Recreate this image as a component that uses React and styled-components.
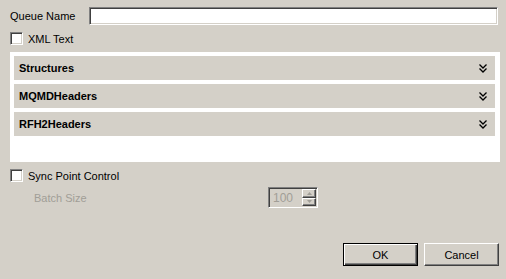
import React from 'react'
import styled, { createGlobalStyle } from 'styled-components'

const Global = createGlobalStyle`
  html, body {
    margin: 0;
    padding: 0;
    background: #d4d0c8;
    font-family: "Liberation Sans", Arial, sans-serif;
    font-size: 11px;
    color: #000;
  }
`

const Dialog = styled.div`
  width: 506px;
  height: 279px;
  box-sizing: border-box;
  padding: 7px 6px 0 10px;
  display: flex;
  flex-direction: column;
`

const Row = styled.div`
  display: flex;
  align-items: center;
  height: ${p => p.h || 13}px;
  margin-top: ${p => p.mt || 0}px;
  padding-left: ${p => p.indent || 0}px;
`

const Label = styled.span`
  width: ${p => p.w ? p.w + 'px' : 'auto'};
  flex-shrink: 0;
  color: ${p => p.disabled ? '#a19e97' : '#000'};
`

const TextInput = styled.div`
  flex: 1;
  height: 18px;
  margin-right: 2px;
  box-sizing: border-box;
  background: #fff;
  border: 1px solid;
  border-color: #808080 #fff #fff #808080;
  box-shadow: inset 1px 1px 0 #404040, inset -1px -1px 0 #d4d0c8;
`

const Check = styled.span`
  width: 13px;
  height: 13px;
  box-sizing: border-box;
  background: #fff;
  border: 1px solid;
  border-color: #808080 #fff #fff #808080;
  box-shadow: inset 1px 1px 0 #404040, inset -1px -1px 0 #d4d0c8;
  margin-right: 5px;
  flex-shrink: 0;
`

const Panel = styled.div`
  margin-top: 7px;
  height: 110px;
  box-sizing: border-box;
  background: #fff;
  padding: 4px 5px 0 4px;
  display: flex;
  flex-direction: column;
  gap: 4px;
`

const Section = styled.div`
  height: 24px;
  background: #d4d0c8;
  display: flex;
  align-items: center;
  justify-content: space-between;
  padding: 0 8px 0 5px;
  font-weight: bold;
`

const Spinner = styled.div`
  width: 50px;
  height: 21px;
  box-sizing: border-box;
  border: 1px solid;
  border-color: #808080 #fff #fff #808080;
  box-shadow: inset 1px 1px 0 #404040;
  display: flex;
  align-items: center;
  padding: 1px 1px 1px 4px;
  color: #a19e97;
  font-size: 12px;
`

const SpinValue = styled.span`
  flex: 1;
`

const SpinButtons = styled.div`
  display: flex;
  flex-direction: column;
  height: 100%;
  width: 14px;
`

const SpinButton = styled.div`
  flex: 1;
  box-sizing: border-box;
  border: 1px solid;
  border-color: #fff #404040 #404040 #fff;
  box-shadow: inset -1px -1px 0 #808080;
  display: flex;
  align-items: center;
  justify-content: center;
`

const Buttons = styled.div`
  display: flex;
  justify-content: flex-end;
  gap: 6px;
  margin-top: 35px;
  padding-right: 1px;
`

const Button = styled.button`
  width: ${p => p.w}px;
  height: 23px;
  box-sizing: border-box;
  font-family: inherit;
  font-size: 11px;
  background: #d4d0c8;
  padding: 0;
  color: #000;
  border: 1px solid;
  border-color: ${p => p.primary ? '#000' : '#fff #404040 #404040 #fff'};
  box-shadow: ${p => p.primary
    ? 'inset 1px 1px 0 #fff, inset -1px -1px 0 #404040, inset -2px -2px 0 #808080'
    : 'inset -1px -1px 0 #808080'};
`

const Chevrons = () => (
  <svg width="8" height="9" viewBox="0 0 8 9">
    <path d="M0.5 0.5 L4 4 L7.5 0.5 M0.5 4.5 L4 8 L7.5 4.5" fill="none" stroke="#000" strokeWidth="1.3" />
  </svg>
)

const Arrow = ({ up }) => (
  <svg width="5" height="3" viewBox="0 0 5 3">
    <path d={up ? 'M0 3 L2.5 0 L5 3 Z' : 'M0 0 L2.5 3 L5 0 Z'} fill="#a19e97" />
  </svg>
)

const sections = ['Structures', 'MQMDHeaders', 'RFH2Headers']

export default function App() {
  return (
    <Dialog>
      <Global />
      <Row h={18}>
        <Label w={79}>Queue Name</Label>
        <TextInput />
      </Row>
      <Row mt={7}>
        <Check />
        <Label>XML Text</Label>
      </Row>
      <Panel>
        {sections.map(s => (
          <Section key={s}>
            {s}
            <Chevrons />
          </Section>
        ))}
      </Panel>
      <Row mt={7}>
        <Check />
        <Label>Sync Point Control</Label>
      </Row>
      <Row mt={5} h={21} indent={24}>
        <Label w={234} disabled>Batch Size</Label>
        <Spinner>
          <SpinValue>100</SpinValue>
          <SpinButtons>
            <SpinButton><Arrow up /></SpinButton>
            <SpinButton><Arrow /></SpinButton>
          </SpinButtons>
        </Spinner>
      </Row>
      <Buttons>
        <Button primary w={75}>OK</Button>
        <Button w={75}>Cancel</Button>
      </Buttons>
    </Dialog>
  )
}
